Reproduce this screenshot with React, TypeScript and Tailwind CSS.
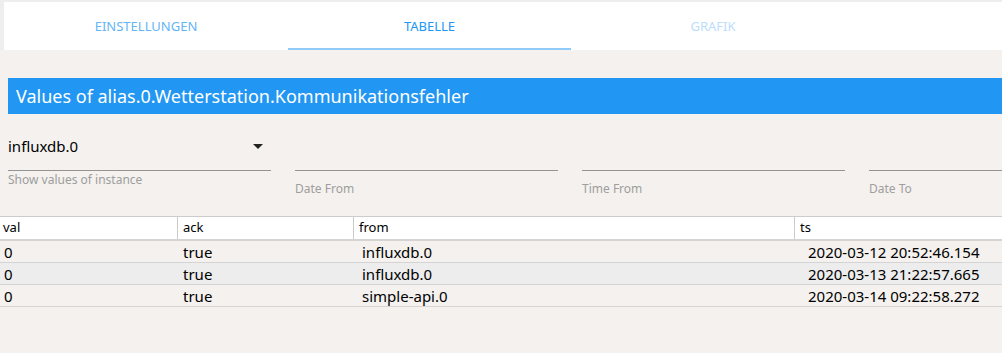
import React from "react";

const rows = [
  { val: "0", ack: "true", from: "influxdb.0", ts: "2020-03-12 20:52:46.154", alt: false },
  { val: "0", ack: "true", from: "influxdb.0", ts: "2020-03-13 21:22:57.665", alt: true },
  { val: "0", ack: "true", from: "simple-api.0", ts: "2020-03-14 09:22:58.272", alt: false },
];

export default function App() {
  return (
    <div className="w-[1002px] h-[353px] bg-[#f4f1ee] overflow-hidden font-['Noto_Sans','Open_Sans',sans-serif] text-black">
      {/* Tabs */}
      <div className="bg-[#eeeeee] pt-[2px] pl-[4px]">
        <div className="flex h-[48px] bg-white">
          <div className="relative w-[284px] flex items-center justify-center pt-[2px] text-[13px] text-[#64b5f6]">
            EINSTELLUNGEN
          </div>
          <div className="relative w-[283px] flex items-center justify-center pt-[2px] text-[13px] text-[#2196f3]">
            TABELLE
            <div className="absolute left-0 right-0 bottom-0 h-[2px] bg-[#90caf9]" />
          </div>
          <div className="relative w-[284px] flex items-center justify-center pt-[2px] text-[13px] text-[#bbdefb]">
            GRAFIK
          </div>
        </div>
      </div>

      {/* Title bar */}
      <div className="mt-[28px] ml-[8px] h-[36px] bg-[#2196f3] flex items-center pl-[8px] text-white text-[18px]">
        Values of alias.0.Wetterstation.Kommunikationsfehler
      </div>

      {/* Fields */}
      <div className="flex gap-[24px] pl-[8px] mt-[20px] h-[82px]">
        <div className="w-[263px] shrink-0">
          <div className="h-[37px] border-b border-[#949494] flex items-start justify-between pt-[2px] pr-[8px]">
            <span className="text-[15px] leading-[20px]">influxdb.0</span>
            <svg width="10" height="5" viewBox="0 0 10 5" className="mt-[8px]">
              <path d="M0 0 L10 0 L5 5 Z" fill="#222" />
            </svg>
          </div>
          <div className="text-[12px] leading-[16px] text-[#9e9e9e] mt-[1px]">Show values of instance</div>
        </div>
        {["Date From", "Time From", "Date To"].map((l) => (
          <div key={l} className="w-[263px] shrink-0">
            <div className="h-[37px] border-b border-[#949494]" />
            <div className="text-[12px] leading-[16px] text-[#9e9e9e] mt-[10px]">{l}</div>
          </div>
        ))}
      </div>

      {/* Table */}
      <div className="border-t border-[#cccccc]">
        <div className="grid grid-cols-[178px_176px_441px_207px] h-[24px] bg-white border-b-2 border-[#d4d4d4] text-[13px]">
          <div className="border-r border-[#cccccc] pl-[3px] flex items-center">val</div>
          <div className="border-r border-[#cccccc] pl-[5px] flex items-center">ack</div>
          <div className="border-r border-[#cccccc] pl-[5px] flex items-center">from</div>
          <div className="pl-[5px] flex items-center">ts</div>
        </div>
        {rows.map((r, i) => (
          <div
            key={i}
            className={`grid grid-cols-[178px_176px_441px_207px] h-[22px] border-b border-[#d4d4d4] text-[15px] ${
              r.alt ? "bg-[#ededed]" : ""
            }`}
          >
            <div className="pl-[4px] flex items-center">{r.val}</div>
            <div className="pl-[5px] flex items-center">{r.ack}</div>
            <div className="pl-[8px] flex items-center">{r.from}</div>
            <div className="pl-[13px] flex items-center">{r.ts}</div>
          </div>
        ))}
      </div>
    </div>
  );
}
